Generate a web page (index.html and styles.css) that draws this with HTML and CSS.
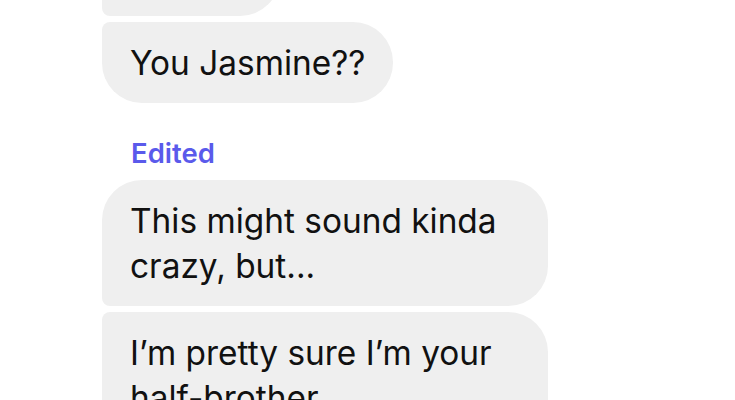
FILE: index.html
```html
<!DOCTYPE html>
<html lang="en">
<head>
<meta charset="utf-8">
<title>Chat</title>
<link rel="stylesheet" href="styles.css">
</head>
<body>
<div class="thread">
  <div class="bubble bubble-prev" aria-hidden="true"></div>
  <div class="bubble bubble-last">You Jasmine??</div>
  <div class="edited">Edited</div>
  <div class="bubble bubble-first">This might sound kinda crazy, but...</div>
  <div class="bubble bubble-mid">I’m pretty sure I’m your half-brother</div>
</div>
</body>
</html>
```

FILE: styles.css
```css
html, body {
  margin: 0;
  padding: 0;
  background: #ffffff;
}

body {
  width: 735px;
  height: 400px;
  overflow: hidden;
  font-family: Inter, "Liberation Sans", sans-serif;
}

.thread {
  display: flex;
  flex-direction: column;
  align-items: flex-start;
  gap: 6px;
  padding-left: 102px;
  margin-top: -65px;
}

.bubble {
  box-sizing: border-box;
  max-width: 446px;
  padding: 19px 28px 17px;
  background: #efefef;
  color: #111111;
  font-size: 33.4px;
  line-height: 45px;
  border-radius: 40px;
}

.bubble-prev {
  width: 178px;
  height: 81px;
  padding: 0;
  border-bottom-left-radius: 8px;
}

.bubble-last {
  border-top-left-radius: 8px;
}

.bubble-first {
  border-bottom-left-radius: 8px;
}

.bubble-mid {
  border-top-left-radius: 8px;
  border-bottom-left-radius: 8px;
}

.edited {
  margin: 29px 0 6px 29px;
  color: #5a5aeb;
  font-size: 27.5px;
  font-weight: 600;
  line-height: 30px;
}
```
